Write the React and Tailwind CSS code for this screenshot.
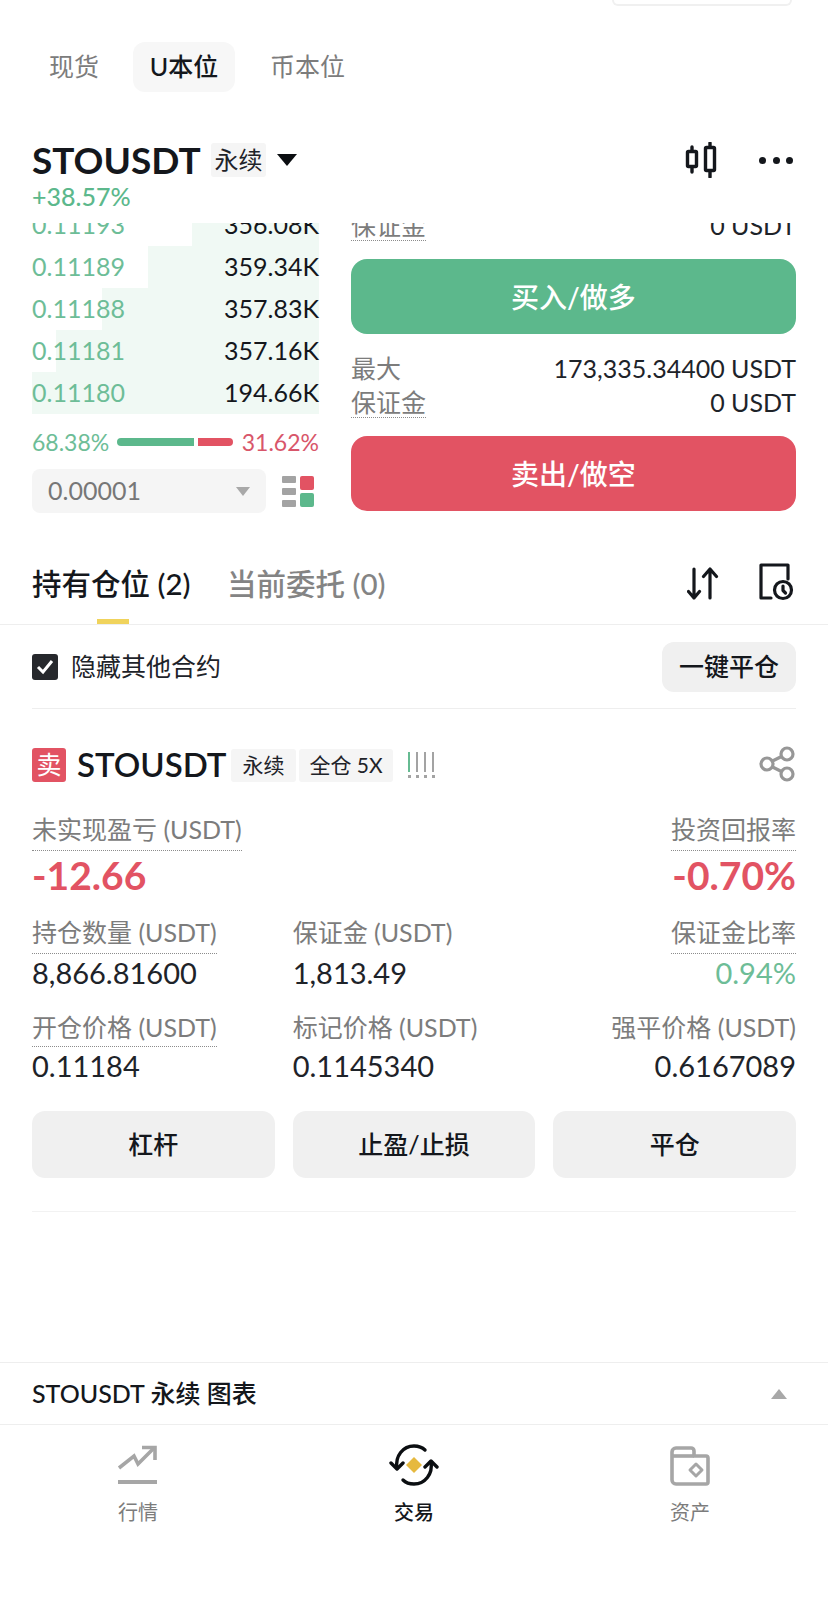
import React from 'react';

const FONT = 'font-["Lato","Noto_Sans_CJK_SC",sans-serif]';

const asks = [
  { price: '0.11193', qty: '356.08K', depth: 127 },
  { price: '0.11189', qty: '359.34K', depth: 171 },
  { price: '0.11188', qty: '357.83K', depth: 217 },
  { price: '0.11181', qty: '357.16K', depth: 263 },
  { price: '0.11180', qty: '194.66K', depth: 287 },
];

// Dotted underline label used all over the trade panel
const Hint = ({ children, dotted = true, pad = 'pb-[2px]', lead = 'leading-[34px]' }) => (
  <span className={`inline-block h-fit ${lead} text-[#7c7c7c] border-b ${pad} ${dotted ? 'border-dotted border-[#8c8c8c]' : 'border-transparent'}`}>
    {children}
  </span>
);

const Tag = ({ children, className = '' }) => (
  <span className={`flex items-center justify-center bg-[#f5f5f5] rounded-[3px] text-[#1e2329] ${className}`}>{children}</span>
);

const Stat = ({ label, value, dotted, right, valueColor = 'text-[#1e2329]', pad }) => (
  <div className={`flex flex-col ${right ? 'items-end' : 'items-start'}`}>
    <Hint dotted={dotted} pad={pad}>{label}</Hint>
    <span className={`text-[29px] leading-[36px] mt-[1px] ${valueColor}`}>{value}</span>
  </div>
);

const CandleIcon = () => (
  <svg width="34" height="36" viewBox="0 0 34 36" fill="none" stroke="#14171c" strokeWidth="3.4" strokeLinecap="round" strokeLinejoin="round">
    <rect x="2.500" y="9.500" width="9" height="15" rx="1" />
    <path d="M7 5v4M7 25v5" />
    <rect x="20.500" y="5.500" width="9" height="23" rx="1" />
    <path d="M25 1v4M25 29v6" />
  </svg>
);

const SortIcon = () => (
  <svg width="32" height="34" viewBox="0 0 32 34" fill="none" stroke="#14171c" strokeWidth="3.2" strokeLinecap="round" strokeLinejoin="round">
    <path d="M7 2v29M1.500 24.500 7 31l5.500-6.500" />
    <path d="M23 31V2M16.500 9.500 23 2l6.500 7.500" />
  </svg>
);

const HistoryIcon = () => (
  <svg width="36" height="38" viewBox="0 0 36 38" fill="none" stroke="#14171c" strokeWidth="3.2" strokeLinecap="round" strokeLinejoin="round">
    <path d="M13 35H3V2h27v14" />
    <circle cx="25" cy="27" r="8.500" />
    <path d="M25 23v4.500l2.500 2.500" />
  </svg>
);

const ShareIcon = () => (
  <svg width="38" height="36" viewBox="0 0 38 36" fill="none" stroke="#979797" strokeWidth="3.2">
    <circle cx="28" cy="8" r="6" />
    <circle cx="8" cy="18" r="6" />
    <circle cx="28" cy="28" r="6" />
    <path d="M13.500 15 22.500 10.500M13.500 21 22.500 25.500" />
  </svg>
);

const MarketIcon = () => (
  <svg width="42" height="40" viewBox="0 0 42 40" fill="none" stroke="#a6a6a6" strokeWidth="3.6">
    <path d="M2 23 17 11l4 8L37 3" />
    <path d="M25 2.500h13V15" />
    <path d="M1 37h39" strokeWidth="4" />
  </svg>
);

const TradeIcon = () => (
  <svg width="50" height="42" viewBox="0 0 50 42" fill="none" stroke="#0b0e11" strokeWidth="3.4" strokeLinecap="round" strokeLinejoin="round">
    <path d="M8 24C6 12 14 2 25 2c4 0 8 1 11 4" />
    <path d="M2 19l6 6 6-6" />
    <path d="M42 18c2 12-6 22-17 22-4 0-8-1-11-4" />
    <path d="M48 23l-6-6-6 6" />
    <path d="M25 13l8 8-8 8-8-8z" fill="#e6b93f" stroke="none" />
  </svg>
);

const WalletIcon = () => (
  <svg width="42" height="42" viewBox="0 0 42 42" fill="none" stroke="#a6a6a6" strokeWidth="3.600" strokeLinejoin="round">
    <path d="M3 8a4 4 0 0 1 4-4h15a3 3 0 0 1 3 3v5h12a2 2 0 0 1 2 2v24a2 2 0 0 1-2 2H7a4 4 0 0 1-4-4z" />
    <path d="M3 12h22" />
    <path d="M27 20l6 6-6 6-6-6z" strokeWidth="3" />
  </svg>
);

const LevelBar = ({ color }) => (
  <span className="flex flex-col gap-[3px]">
    <i className={`w-[2px] h-[20px] ${color}`} />
    <i className="w-[3px] h-[3px] bg-[#a3a3a3]" />
  </span>
);

const App = () => {
  return (
    <div className={`${FONT} w-[828px] h-[1600px] bg-white overflow-hidden flex flex-col text-[#1e2329] text-[25px]`}>
      {/* Bit of the search pill left at the top edge */}
      <div className="h-[6px] mb-[2px] flex justify-end pr-[36px]">
        <div className="w-[180px] h-full border-b-2 border-x-2 border-[#f0f0f0] rounded-b-[16px]" />
      </div>

      {/* Market type tabs */}
      <div className="mt-[34px] h-[50px] pl-[32px] flex items-center text-[25px] text-[#7c7c7c]">
        <span className="w-[101px] pl-[17px]">现货</span>
        <span className="w-[102px] h-full flex items-center justify-center bg-[#f7f7f7] rounded-[12px] text-[#14171c] font-medium">U本位</span>
        <span className="ml-[35px]">币本位</span>
      </div>

      {/* Symbol header */}
      <div className="mt-[51px] h-[34px] pl-[32px] pr-[35px] flex items-center">
        <span className="text-[37px] leading-[34px] font-bold text-[#14171c] w-[179px]">STOUSDT</span>
        <Tag className="w-[55px] h-[34px] text-[24px]">永续</Tag>
        <span className="ml-[11px] w-0 h-0 border-x-[10px] border-x-transparent border-t-[12px] border-t-[#0b0e11]" />
        <span className="ml-auto mr-[40px] flex"><CandleIcon /></span>
        <span className="flex gap-[6.500px]">
          <i className="w-[7px] h-[7px] rounded-full bg-[#14171c]" />
          <i className="w-[7px] h-[7px] rounded-full bg-[#14171c]" />
          <i className="w-[7px] h-[7px] rounded-full bg-[#14171c]" />
        </span>
      </div>
      <div className="mt-[4px] mb-[12px] pl-[32px] h-[30px] leading-[30px] text-[25px] font-medium text-[#5cb88c]">+38.57%</div>

      {/* Order book and order buttons */}
      <div className="h-[317px] overflow-hidden px-[32px] flex gap-[32px]">
        <div className="w-[287px] shrink-0">
          <div className="-mt-[19px]">
            {asks.map((row) => (
              <div key={row.price} className="relative h-[42px] flex items-center justify-between">
                <div className="absolute inset-y-0 right-0 bg-[#f0f9f4]" style={{ width: row.depth }} />
                <span className="relative text-[25px] text-[#6dbd97]">{row.price}</span>
                <span className="relative text-[25px] text-[#14171c]">{row.qty}</span>
              </div>
            ))}
          </div>
          <div className="mt-[14px] h-[28px] flex items-center text-[23px] leading-[28px]">
            <span className="w-[85px] text-[#6dbd97]">68.38%</span>
            <span className="w-[77px] h-[8px] bg-[#5cb88c] rounded-l-full" />
            <span className="ml-[4px] w-[35px] h-[8px] bg-[#e25363] rounded-r-full" />
            <span className="ml-auto text-[#d8566a]">31.62%</span>
          </div>
          <div className="mt-[13px] flex items-center">
            <div className="w-[234px] h-[44px] bg-[#f5f5f5] rounded-[8px] pl-[16px] pr-[16px] flex items-center justify-between text-[#777777] text-[25px]">
              <span>0.00001</span>
              <span className="w-0 h-0 border-x-[7px] border-x-transparent border-t-[9px] border-t-[#a8a8a8]" />
            </div>
            <div className="ml-[16px] flex gap-[4px]">
              <div className="flex flex-col gap-[5px]">
                <i className="w-[14px] h-[7px] bg-[#a3a3a3] rounded-[1px]" />
                <i className="w-[14px] h-[7px] bg-[#a3a3a3] rounded-[1px]" />
                <i className="w-[14px] h-[7px] bg-[#a3a3a3] rounded-[1px]" />
              </div>
              <div className="flex flex-col gap-[3px]">
                <i className="w-[14px] h-[14px] bg-[#e25363] rounded-[2px]" />
                <i className="w-[14px] h-[14px] bg-[#5cb88c] rounded-[2px]" />
              </div>
            </div>
          </div>
        </div>

        <div className="flex-1 -mt-[15px]">
          <div className="h-[34px] pt-[2px] flex justify-between">
            <Hint pad="pb-0" lead="leading-[30px]">保证金</Hint>
            <span className="leading-[30px]">0 USDT</span>
          </div>
          <button className="mt-[17px] w-full h-[75px] rounded-[16px] bg-[#5cb88c] text-white text-[28px] font-medium">买入/做多</button>
          <div className="mt-[17px] h-[34px] flex justify-between leading-[34px]">
            <span className="text-[#7c7c7c]">最大</span>
            <span>173,335.34400 USDT</span>
          </div>
          <div className="h-[34px] pt-[2px] flex justify-between">
            <Hint pad="pb-0" lead="leading-[30px]">保证金</Hint>
            <span className="leading-[30px]">0 USDT</span>
          </div>
          <button className="mt-[17px] w-full h-[75px] rounded-[16px] bg-[#e25363] text-white text-[28px] font-medium">卖出/做空</button>
        </div>
      </div>

      {/* Positions / open orders tabs */}
      <div className="h-[85px] border-b border-[#eeeeee] pl-[32px] pr-[34px] flex items-center pt-[5px] relative">
        <span className="text-[29.500px] font-medium text-[#14171c] w-[195px]">持有仓位 (2)</span>
        <span className="text-[29.500px] font-medium text-[#848484]">当前委托 (0)</span>
        <span className="ml-auto mr-[39px] flex -mt-[2px]"><SortIcon /></span>
        <span className="flex -mt-[5px]"><HistoryIcon /></span>
        <i className="absolute left-[97px] bottom-0 w-[32px] h-[5px] bg-[#f0d35c]" />
      </div>

      <div className="h-[84px] mx-[32px] border-b border-[#eeeeee] flex items-center justify-between">
        <label className="flex items-center gap-[13px] text-[25px]">
          <span className="w-[26px] h-[26px] bg-[#26282c] rounded-[3px] flex items-center justify-center">
            <svg width="18" height="16" viewBox="0 0 18 16" fill="none" stroke="white" strokeWidth="3"><path d="M2 8l5 5 9-11" /></svg>
          </span>
          隐藏其他合约
        </label>
        <button className="w-[134px] h-[50px] rounded-[12px] bg-[#f0f0f0] text-[25px] font-medium text-[#14171c]">一键平仓</button>
      </div>

      {/* Position card */}
      <div className="mx-[32px] pt-[39px] pb-[33px] border-b border-[#f2f2f2]">
        <div className="h-[34px] flex items-center">
          <span className="w-[34px] h-[34px] bg-[#e25363] rounded-[3px] text-white flex items-center justify-center text-[25px]">卖</span>
          <span className="ml-[11px] w-[154px] text-[33px] font-semibold text-[#14171c]">STOUSDT</span>
          <Tag className="w-[65px] h-[33px] text-[21px]">永续</Tag>
          <Tag className="ml-[3px] w-[94px] h-[33px] text-[21px]">全仓 5X</Tag>
          <span className="ml-[15px] flex gap-[5px]">
            <LevelBar color="bg-[#66bb92]" />
            <LevelBar color="bg-[#a3a3a3]" />
            <LevelBar color="bg-[#a3a3a3]" />
            <LevelBar color="bg-[#a3a3a3]" />
          </span>
          <span className="ml-auto flex -mr-[1px] -mt-[2px]"><ShareIcon /></span>
        </div>

        <div className="mt-[30px] flex justify-between">
          <div className="flex flex-col items-start">
            <Hint pad="pb-[4px]">未实现盈亏 (USDT)</Hint>
            <span className="mt-[1px] h-[46px] leading-[46px] text-[39px] font-bold text-[#e25363]">-12.66</span>
          </div>
          <div className="flex flex-col items-end">
            <Hint pad="pb-[4px]">投资回报率</Hint>
            <span className="mt-[1px] h-[46px] leading-[46px] text-[39px] font-bold text-[#e25363]">-0.70%</span>
          </div>
        </div>

        <div className="mt-[17px] grid grid-cols-3 gap-x-[18px] gap-y-[19px]">
          <Stat label="持仓数量 (USDT)" value="8,866.81600" dotted pad="pb-[4px]" />
          <Stat label="保证金 (USDT)" value="1,813.49" dotted={false} pad="pb-[4px]" />
          <Stat label="保证金比率" value="0.94%" dotted right valueColor="text-[#6dbd97]" pad="pb-[4px]" />
          <Stat label="开仓价格 (USDT)" value="0.11184" dotted />
          <Stat label="标记价格 (USDT)" value="0.1145340" dotted={false} />
          <Stat label="强平价格 (USDT)" value="0.6167089" dotted={false} right />
        </div>

        <div className="mt-[27px] grid grid-cols-3 gap-x-[18px]">
          {['杠杆', '止盈/止损', '平仓'].map((label) => (
            <button key={label} className="h-[67px] rounded-[13px] bg-[#f0f0f0] text-[25px] font-medium text-[#14171c]">{label}</button>
          ))}
        </div>
      </div>

      {/* Chart drawer, pinned at the bottom */}
      <div className="mt-[150px] h-[63px] border-y border-[#eeeeee] pl-[32px] pr-[41px] flex items-center justify-between">
        <span className="text-[25px] font-medium text-[#14171c]">STOUSDT 永续 图表</span>
        <span className="w-0 h-0 border-x-[8px] border-x-transparent border-b-[10px] border-b-[#a8a8a8]" />
      </div>

      {/* Bottom nav */}
      <nav className="grid grid-cols-3 pt-[19px]">
        {[
          { label: '行情', icon: <MarketIcon />, on: false },
          { label: '交易', icon: <TradeIcon />, on: true },
          { label: '资产', icon: <WalletIcon />, on: false },
        ].map((item) => (
          <div key={item.label} className="flex flex-col items-center">
            <div className="h-[42px] flex items-center justify-center">{item.icon}</div>
            <span className={`mt-[12px] text-[20px] leading-[28px] ${item.on ? 'text-[#14171c] font-medium' : 'text-[#7c7c7c]'}`}>{item.label}</span>
          </div>
        ))}
      </nav>
    </div>
  );
};

export default App;
